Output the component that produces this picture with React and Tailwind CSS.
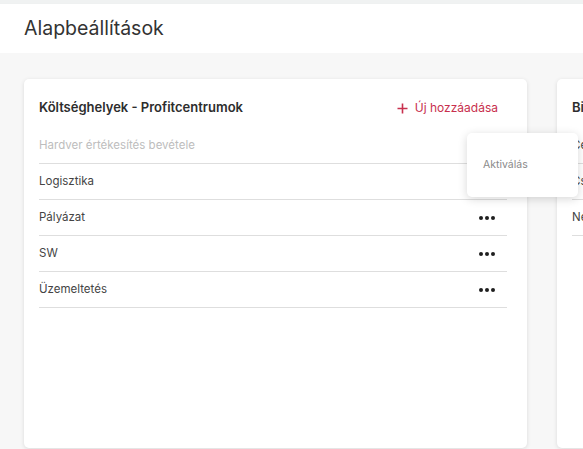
import React from "react";

const rows = [
  { label: "Hardver értékesítés bevétele", inactive: true },
  { label: "Logisztika" },
  { label: "Pályázat" },
  { label: "SW" },
  { label: "Üzemeltetés" },
];

const rows2 = ["Céges bizonylat", "Csoportos", "Nem releváns"];

function Dots() {
  return (
    <div className="flex items-center gap-[2px]">
      <span className="block h-[4px] w-[4px] rounded-full bg-[#1f1f1f]" />
      <span className="block h-[4px] w-[4px] rounded-full bg-[#1f1f1f]" />
      <span className="block h-[4px] w-[4px] rounded-full bg-[#1f1f1f]" />
    </div>
  );
}

function Card({ title, children, action }) {
  return (
    <div className="relative flex h-[369px] w-[503px] shrink-0 flex-col rounded-[5px] bg-white pl-[15px] pr-[20px] pt-[20px] shadow-[0_1px_4px_rgba(0,0,0,0.12)]">
      <div className="flex h-[18px] items-center justify-between pr-[9px]">
        <span className="text-[13px] font-semibold text-[#2d2d2d]">{title}</span>
        {action}
      </div>
      <div className="mt-[11px] flex flex-col">{children}</div>
    </div>
  );
}

export default function App() {
  return (
    <div
      className="h-[449px] w-[583px] overflow-hidden bg-[#f0f2f2]"
      style={{ fontFamily: "Inter, 'Noto Sans', sans-serif" }}
    >
      <div className="mt-[4px] flex h-[49px] items-center bg-white pl-[24px] shadow-[0_1px_3px_rgba(0,0,0,0.04)]">
        <h1 className="text-[19.5px] font-normal text-[#333]">Alapbeállítások</h1>
      </div>
      <div className="flex h-[396px] gap-[30px] bg-[#f7f7f7] pl-[24px] pt-[26px]">
        <Card
          title="Költséghelyek - Profitcentrumok"
          action={
            <button className="flex items-center gap-[7px] text-[12px] text-[#c8304e]">
              <svg width="11" height="11" viewBox="0 0 11 11" fill="none">
                <path d="M5.5 0.5v10M0.5 5.5h10" stroke="#c8304e" strokeWidth="1.6" />
              </svg>
              Új hozzáadása
            </button>
          }
        >
          {rows.map((r, i) => (
            <div
              key={r.label}
              className="flex h-[36px] items-center justify-between border-b border-[#dedede] pr-[12px]"
            >
              <span className={r.inactive ? "text-[11.5px] text-[#bdbdbd]" : "text-[11.5px] text-[#444]"}>
                {r.label}
              </span>
              {i > 1 && <Dots />}
            </div>
          ))}
          <div className="absolute left-[443px] top-[54px] z-10 flex h-[64px] w-[111px] items-center rounded-[5px] bg-white pl-[16px] shadow-[0_2px_10px_rgba(0,0,0,0.16)]">
            <span className="text-[10.5px] text-[#8a8a8a]">Aktiválás</span>
          </div>
        </Card>
        <Card title="Bizonylattípusok">
          {rows2.map((r) => (
            <div key={r} className="flex h-[36px] items-center border-b border-[#dedede]">
              <span className="text-[11.5px] text-[#444]">{r}</span>
            </div>
          ))}
        </Card>
      </div>
    </div>
  );
}
